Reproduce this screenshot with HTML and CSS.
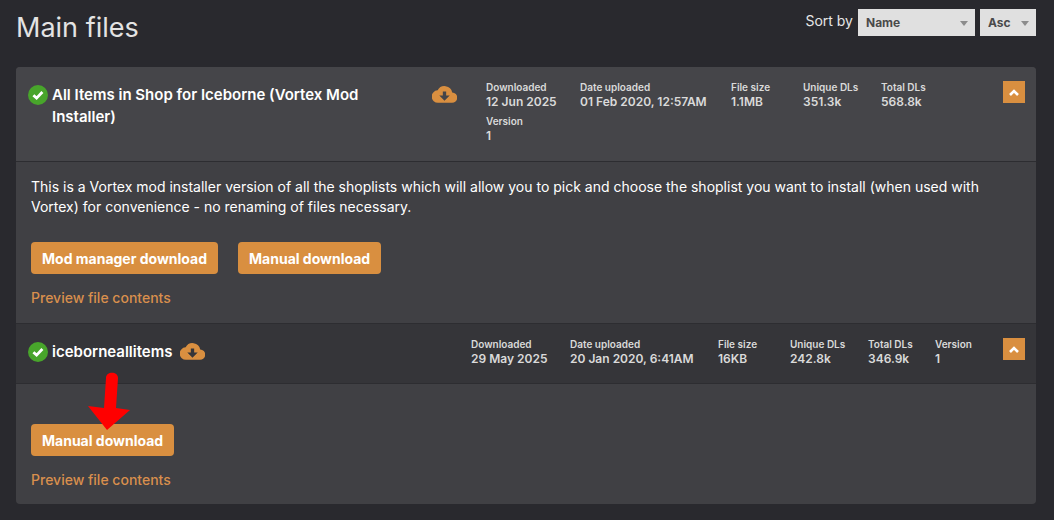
FILE: index.html
```html
<!DOCTYPE html>
<html lang="en">
<head>
<meta charset="utf-8">
<title>Main files</title>
<link rel="stylesheet" href="styles.css">
</head>
<body>
<svg class="sprite" aria-hidden="true">
  <symbol id="tick" viewBox="0 0 20 20"><circle cx="10" cy="10" r="10" fill="#48a52b"/><path d="M5.4 10.2 8.6 13.1 14.4 7" fill="none" stroke="#fff" stroke-width="2.8"/></symbol>
  <symbol id="cloud" viewBox="0 0 24 16"><path fill="#d98f40" fill-rule="evenodd" d="M19.4 6A7.5 7.5 0 0 0 5.4 4 6 6 0 0 0 6 16H19a5 5 0 0 0 .4-10ZM10.4 5H13.6V9H17L12 14 7 9H10.4Z"/></symbol>
  <symbol id="chevron" viewBox="0 0 10 7"><path d="M1 6 5 2 9 6" fill="none" stroke="#fff" stroke-width="2.6"/></symbol>
</svg>
<main class="page">
  <header class="toolbar">
    <h1 class="heading">Main files</h1>
    <form class="sort">
      <label class="sort-label" for="sort-field">Sort by</label>
      <span class="picker picker-field"><select id="sort-field"><option>Name</option></select></span>
      <span class="picker"><select aria-label="Sort order"><option>Asc</option></select></span>
    </form>
  </header>
  <div class="files">
    <section class="file">
      <div class="file-head">
        <svg class="tick"><use href="#tick"/></svg>
        <div class="title"><h2 class="name">All Items in Shop for Iceborne (Vortex Mod Installer)</h2></div>
        <svg class="cloud"><use href="#cloud"/></svg>
        <dl class="stats stats-wrap">
          <div class="stat"><dt>Downloaded</dt><dd>12 Jun 2025</dd></div>
          <div class="stat"><dt>Date uploaded</dt><dd>01 Feb 2020, 12:57AM</dd></div>
          <div class="stat"><dt>File size</dt><dd>1.1MB</dd></div>
          <div class="stat"><dt>Unique DLs</dt><dd>351.3k</dd></div>
          <div class="stat"><dt>Total DLs</dt><dd>568.8k</dd></div>
          <div class="stat"><dt>Version</dt><dd>1</dd></div>
        </dl>
        <button class="toggle" type="button" aria-label="Collapse"><svg class="chevron"><use href="#chevron"/></svg></button>
      </div>
      <div class="file-body">
        <p class="description">This is a Vortex mod installer version of all the shoplists which will allow you to pick and choose the shoplist you want to install (when used with Vortex) for convenience - no renaming of files necessary.</p>
        <div class="actions">
          <button class="btn" type="button">Mod manager download</button>
          <button class="btn" type="button">Manual download</button>
        </div>
        <a class="preview" href="#">Preview file contents</a>
      </div>
    </section>
    <section class="file">
      <div class="file-head file-head-dark">
        <svg class="tick"><use href="#tick"/></svg>
        <h2 class="name">iceborneallitems</h2>
        <svg class="cloud cloud-inline"><use href="#cloud"/></svg>
        <dl class="stats stats-line">
          <div class="stat"><dt>Downloaded</dt><dd>29 May 2025</dd></div>
          <div class="stat"><dt>Date uploaded</dt><dd>20 Jan 2020, 6:41AM</dd></div>
          <div class="stat"><dt>File size</dt><dd>16KB</dd></div>
          <div class="stat"><dt>Unique DLs</dt><dd>242.8k</dd></div>
          <div class="stat"><dt>Total DLs</dt><dd>346.9k</dd></div>
          <div class="stat"><dt>Version</dt><dd>1</dd></div>
        </dl>
        <button class="toggle" type="button" aria-label="Collapse"><svg class="chevron"><use href="#chevron"/></svg></button>
      </div>
      <div class="file-body file-body-last">
        <div class="actions">
          <span class="pointed">
            <button class="btn" type="button">Manual download</button>
            <svg class="arrow" viewBox="0 0 42 60" aria-hidden="true"><path fill="#f00" d="M18 7C18 0 30 0 30 7L28 37 42 39 19 59 0 35 16 37Z"/></svg>
          </span>
        </div>
        <a class="preview" href="#">Preview file contents</a>
      </div>
    </section>
  </div>
</main>
</body>
</html>
```
FILE: styles.css
```css
* { box-sizing: border-box; }
body {
  margin: 0;
  background: #29292e;
  color: #fff;
  font-family: Inter, sans-serif;
  font-size: 14px;
  line-height: 20px;
}
h1, h2, p, dl, dd { margin: 0; }
button, select { font-family: inherit; }
.sprite { position: absolute; width: 0; height: 0; }
.page { padding: 9px 18px 16px 16px; }
.toolbar { display: flex; justify-content: space-between; align-items: flex-start; margin-bottom: 20px; }
.heading { font-size: 27px; line-height: 38px; font-weight: 400; color: #e3e3e3; }
.sort { display: flex; align-items: flex-start; gap: 5px; color: #e6e6e6; }
.sort-label { line-height: 24px; }
.picker { position: relative; display: flex; }
.picker::after {
  content: "";
  position: absolute;
  right: 7px;
  top: 12px;
  border: 4px solid transparent;
  border-top: 5px solid #8c8c8c;
  border-bottom: 0;
  pointer-events: none;
}
.picker select {
  appearance: none;
  width: 56px;
  height: 27px;
  padding: 0 8px;
  border: 0;
  border-radius: 0;
  background: #e0e0e0;
  color: #4a4a4a;
  font-size: 12px;
  font-weight: 700;
}
.picker-field select { width: 117px; }
.files { border-radius: 4px; overflow: hidden; background: #404044; }
.file-head { display: flex; align-items: flex-start; padding: 14px 11px 18px 12px; background: #454549; border-bottom: 1px solid #2d2d31; }
.file-head-dark { background: #353539; border-top: 1px solid #2d2d31; padding-bottom: 17px; }
.tick { flex: none; width: 20px; height: 20px; margin: 4px 4px 0 0; }
.title { flex: 1; padding-right: 48px; }
.name { font-size: 15px; line-height: 22px; font-weight: 600; margin-top: 3px; }
.title .name { max-width: 332px; }
.cloud { flex: none; width: 25px; height: 17px; margin: 5px 29px 0 0; }
.cloud-inline { margin-left: 8px; }
.stats { display: grid; row-gap: 6px; flex: none; margin-left: auto; color: #dadada; }
.stats-wrap { grid-template-columns: 94px 151px 72px 78px 112px; }
.stats-line { grid-template-columns: 99px 148px 72px 78px 67px 58px; }
dt { font-size: 10px; line-height: 12px; font-weight: 600; margin-bottom: 2px; }
dd { font-size: 12px; line-height: 14px; font-weight: 600; }
.toggle { flex: none; display: flex; align-items: center; justify-content: center; width: 22px; height: 22px; margin-left: 10px; padding: 0; border: 0; background: #d98f40; }
.chevron { width: 10px; height: 7px; }
.file-body { padding: 15px; }
.file-body-last { padding-top: 40px; padding-bottom: 14px; }
.description { margin-bottom: 25px; }
.actions { display: flex; gap: 20px; margin-bottom: 14px; }
.btn { height: 32px; padding: 0 11px; border: 0; border-radius: 4px; background: #d98f40; color: #fff; font-size: 14px; font-weight: 700; }
.preview { display: inline-block; color: #d98f4d; font-weight: 500; text-decoration: none; }
.pointed { position: relative; display: flex; }
.arrow { position: absolute; left: 57px; bottom: 25px; width: 42px; height: 60px; pointer-events: none; }
```
